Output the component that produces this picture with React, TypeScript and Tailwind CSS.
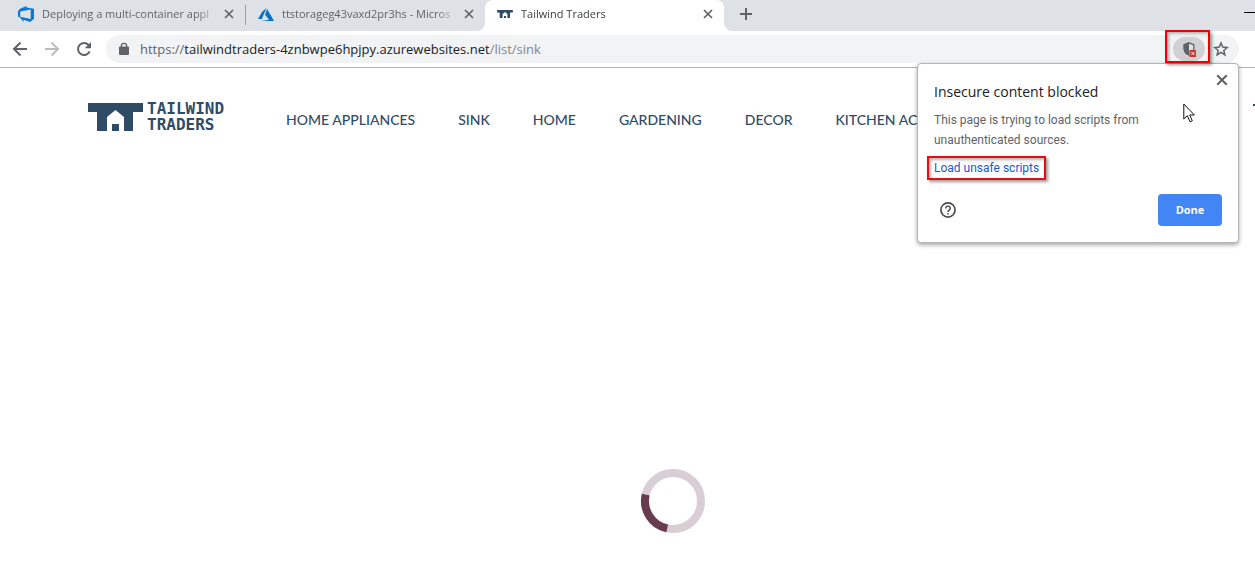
import React from "react";

const UI = "font-['Open_Sans','Noto_Sans',sans-serif]";

function DevOpsIcon() {
  return (
    <svg width="16" height="16" viewBox="0 0 16 16" aria-hidden="true">
      <path
        fillRule="evenodd"
        fill="#0a78d4"
        d="M16 2.700v10.100l-4 3.200-6.400-2.300v2.200L2 11.400 0 10.600V5.200l2-2.400L8.600 0v1.400zM12.700 3.400 2.200 5.600v5.200l10.500 2.100z"
      />
    </svg>
  );
}

function AzureIcon() {
  return (
    <svg width="16" height="16" viewBox="0 0 16 16" aria-hidden="true">
      <path fill="#0a72c6" d="M8.600 2 4.200 5.700 0 13h3.800zM9.200 3 7 8.800l4.100 4.900L3.200 15H16z" />
    </svg>
  );
}

function TradersMark({ className }: { className: string }) {
  return (
    <svg className={className} viewBox="0 0 55 28" aria-hidden="true">
      <path fill="#2f4b66" d="M0 0h55v9H45v19H36V14L27.500 7 19 14v14H9V9H0zM24 21h7v7h-7z" />
    </svg>
  );
}

function Cross({ className }: { className: string }) {
  return (
    <svg className={className} viewBox="0 0 10 10" fill="none" stroke="#5f6368" strokeWidth="1.700" aria-hidden="true">
      <path d="M1 1l8 8M9 1L1 9" />
    </svg>
  );
}

type TabProps = { icon: React.ReactNode; title: string; active?: boolean };

function Tab({ icon, title, active }: TabProps) {
  return (
    <div
      role="tab"
      aria-selected={!!active}
      className={
        "flex h-full w-[239px] shrink-0 items-center pb-1 pl-3 pr-2 " +
        (active ? "rounded-t-lg bg-white text-[#3c4043]" : "text-[#5f6368]")
      }
    >
      <span className="flex w-4 shrink-0 justify-center">{icon}</span>
      <span className="ml-2 min-w-0 flex-1 overflow-hidden whitespace-nowrap text-[11px] leading-4 [mask-image:linear-gradient(to_right,black_88%,transparent)]">
        {title}
      </span>
      <button aria-label={"Close " + title} className="ml-1 flex size-4 items-center justify-center">
        <Cross className="size-[10px]" />
      </button>
    </div>
  );
}

function TabStrip() {
  return (
    <div role="tablist" className="flex h-[31px] overflow-hidden bg-linear-to-b from-[#dee1e6] from-50% to-white to-50%">
      <div className="flex items-center rounded-br-lg bg-[#dee1e6] pl-1.5">
        <Tab icon={<DevOpsIcon />} title="Deploying a multi-container appl" />
        <span className="mb-0.5 h-5 w-px bg-[#9a9da1]" />
        <Tab icon={<AzureIcon />} title="ttstorageg43vaxd2pr3hs - Micros" />
      </div>
      <Tab icon={<TradersMark className="h-2 w-4" />} title="Tailwind Traders" active />
      <div className="flex flex-1 justify-between rounded-bl-lg bg-[#dee1e6]">
        <button aria-label="New tab" className="ml-3 flex h-7 w-5 items-center justify-center">
          <svg width="12" height="12" viewBox="0 0 12 12" stroke="#5f6368" strokeWidth="2" aria-hidden="true">
            <path d="M6 0v12M0 6h12" />
          </svg>
        </button>
        <button aria-label="Minimize" className="flex h-6 w-[11px] items-center">
          <span className="h-px w-full bg-black" />
        </button>
      </div>
    </div>
  );
}

function Toolbar() {
  return (
    <div className="flex h-[37px] items-center border-b border-[#b0b2b5] bg-white pl-3 pr-4">
      <button aria-label="Back" className="size-4">
        <svg width="16" height="16" viewBox="0 0 16 16" fill="none" stroke="#5f6368" strokeWidth="2" aria-hidden="true">
          <path d="M15 8H2.500M8.500 1.500 2 8l6.500 6.500" />
        </svg>
      </button>
      <button aria-label="Forward" className="ml-4 size-4">
        <svg width="16" height="16" viewBox="0 0 16 16" fill="none" stroke="#babcbe" strokeWidth="2" aria-hidden="true">
          <path d="M1 8h12.500M7.500 1.500 14 8l-6.500 6.500" />
        </svg>
      </button>
      <button aria-label="Reload" className="ml-4 size-4">
        <svg width="16" height="16" viewBox="0 0 16 16" fill="none" stroke="#5f6368" strokeWidth="2" aria-hidden="true">
          <path d="M13.600 10.300A6 6 0 1 1 12.500 4" />
          <path fill="#5f6368" stroke="none" d="M15 1v6.300H8.700z" />
        </svg>
      </button>
      <div className="ml-3.5 flex h-7 flex-1 items-center rounded-full bg-[#f1f3f4] pl-3 pr-2.5">
        <svg width="12" height="14" viewBox="0 0 12 14" aria-hidden="true">
          <path
            fill="#5f6368"
            fillRule="evenodd"
            d="M2.700 4.500V4a3.300 3.300 0 0 1 6.600 0v.5h.7a1 1 0 0 1 1 1V12a1 1 0 0 1-1 1H2a1 1 0 0 1-1-1V5.500a1 1 0 0 1 1-1zM4 4.500h4V4a2 2 0 0 0-4 0z"
          />
        </svg>
        <span className="ml-2.5 flex-1 whitespace-nowrap text-[13px] leading-5 text-[#80868b]">
          <span className="text-[#5f6368]">https://</span>
          <span className="text-[#202124]">tailwindtraders-4znbwpe6hpjpy.azurewebsites.net</span>
          /list/sink
        </span>
        <div className="relative mr-2 flex">
          <button
            aria-label="Insecure content blocked"
            className="flex h-6 w-8 items-center justify-center rounded-full bg-[#cfd1d2]"
          >
            <svg width="14" height="15" viewBox="0 0 14 15" aria-hidden="true">
              <path
                fill="#dfe1e2"
                stroke="#5f6368"
                strokeWidth="1.300"
                d="M7 .8 11.800 2.800V6.500C11.800 9.500 9.800 12 7 13 4.200 12 2.200 9.500 2.200 6.500V2.800z"
              />
              <path fill="#5f6368" d="M7 .2v13.300C4 12.500 1.500 9.700 1.500 6.500V2.500z" />
              <path fill="#c5392f" d="M7.500 8H14V15H7.500z" />
              <path stroke="#fff" d="m9.300 10 3 3m0-3-3 3" />
            </svg>
          </button>
          <span className="pointer-events-none absolute -bottom-0.5 -left-2 -right-[5px] -top-[7px] z-20 border-2 border-[#f00000] shadow-[2px_2px_3px_rgba(0,0,0,0.4),inset_2px_2px_3px_rgba(0,0,0,0.3)]" />
        </div>
        <button aria-label="Bookmark" className="size-4">
          <svg width="16" height="16" viewBox="0 0 16 16" fill="none" stroke="#5f6368" strokeWidth="1.500" aria-hidden="true">
            <path d="m8 2 1.700 4.100 4.500.4-3.400 2.900 1.100 4.400L8 11.400l-3.900 2.400 1.100-4.400L1.800 6.500l4.500-.4z" />
          </svg>
        </button>
      </div>
    </div>
  );
}

const LINKS = ["HOME APPLIANCES", "SINK", "HOME", "GARDENING", "DECOR", "KITCHEN AC"];

function SiteHeader() {
  return (
    <header className="flex items-center overflow-hidden pl-[88px] pt-[33px] text-[#2f4b66]">
      <a href="#home" className="flex shrink-0 items-center gap-1">
        <TradersMark className="h-7 w-[55px]" />
        <span className="flex flex-col font-['DejaVu_Sans_Mono',monospace] text-base font-bold leading-4">
          <span>TAILWIND</span>
          <span>TRADERS</span>
        </span>
      </a>
      <nav className="ml-[62px] mt-1.5 flex gap-[43px] whitespace-nowrap font-[Lato,sans-serif] text-sm leading-5 font-medium">
        {LINKS.map((l) => (
          <a key={l} href="#list">
            {l}
          </a>
        ))}
      </nav>
      <span className="ml-auto mt-[3px] h-0.5 w-0.5 self-start bg-[#2f4b66]" />
    </header>
  );
}

function BlockedPopup() {
  return (
    <div
      role="dialog"
      aria-labelledby="blocked-title"
      className="absolute right-4 top-[63px] z-10 w-[322px] rounded-sm border border-[#b4b4b4] bg-white p-4 shadow-[0_2px_4px_rgba(0,0,0,0.35)]"
    >
      <button aria-label="Close" className="absolute right-2.5 top-2.5 size-3">
        <Cross className="size-3" />
      </button>
      <h2 id="blocked-title" className="text-sm leading-6 text-[#202124]">
        Insecure content blocked
      </h2>
      <p className="mt-1.5 w-56 font-[Roboto,sans-serif] text-xs leading-5 text-[#5f6368]">
        This page is trying to load scripts from unauthenticated sources.
      </p>
      <div className="relative mt-2 w-fit">
        <a href="#unsafe" className="block font-[Roboto,sans-serif] text-xs leading-5 text-[#1a57d0]">
          Load unsafe scripts
        </a>
        <span className="pointer-events-none absolute -inset-x-[7px] -inset-y-0.5 border-2 border-[#e01010] shadow-[2px_2px_3px_rgba(0,0,0,0.4),inset_2px_2px_3px_rgba(0,0,0,0.3)]" />
      </div>
      <div className="mt-4 flex items-center justify-between pl-1.5">
        <button aria-label="Help" className="size-4">
          <svg width="16" height="16" viewBox="0 0 16 16" fill="none" stroke="#4a4d51" strokeWidth="1.700" aria-hidden="true">
            <circle cx="8" cy="8" r="7.100" />
            <path strokeWidth="1.500" d="M5.800 6.400a2.200 2.200 0 1 1 3.400 1.800C8.400 8.700 8 9.100 8 10M8 11v1.500" />
          </svg>
        </button>
        <button className="h-8 w-16 rounded-sm bg-[#4285f4] text-[11px] font-bold text-white">Done</button>
      </div>
      <svg className="absolute right-[43px] top-[39px] h-5 w-3" viewBox="0 0 12 20" aria-hidden="true">
        <path fill="#fff" stroke="#111" d="M.8 1v15l3.500-3.300L7 18.800l2.300-1L6.700 12h4.700z" />
      </svg>
    </div>
  );
}

export default function App() {
  return (
    <div className={"relative min-h-screen overflow-hidden bg-white " + UI}>
      <TabStrip />
      <Toolbar />
      <SiteHeader />
      <main className="flex justify-center pt-[335px]">
        <svg role="img" aria-label="Loading" className="ml-[91px] size-[66px]" viewBox="0 0 66 66" fill="none" strokeWidth="8">
          <circle cx="33" cy="33" r="28" stroke="#d9ced4" />
          <path stroke="#673c4f" d="M5.700 26.700A28 28 0 0 0 27.200 60.400" />
        </svg>
      </main>
      <BlockedPopup />
    </div>
  );
}
